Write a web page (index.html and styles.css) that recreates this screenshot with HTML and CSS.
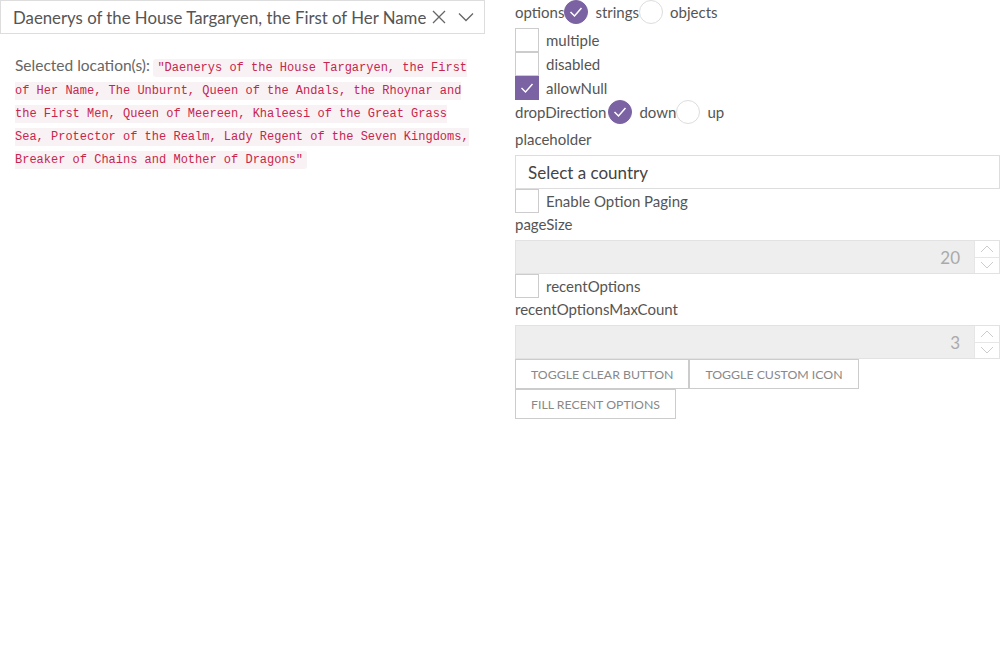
FILE: index.html
```html
<!DOCTYPE html>
<html>
<head>
<meta charset="utf-8">
<link rel="stylesheet" href="styles.css">
</head>
<body>
<div class="app">
  <div class="left">
    <div class="combo">
      <span class="combo-value">Daenerys of the House Targaryen, the First of Her Name</span>
      <svg class="combo-clear" width="16" height="16" viewBox="0 0 16 16"><path d="M2 2L14 14M14 2L2 14" stroke="#666" stroke-width="1.3" fill="none"/></svg>
      <svg class="combo-arrow" width="16" height="10" viewBox="0 0 16 10"><path d="M1 1.5L8 8.5L15 1.5" stroke="#666" stroke-width="1.3" fill="none"/></svg>
    </div>
    <div class="result"><span class="result-label">Selected location(s):</span> <code>"Daenerys of the House Targaryen, the First of Her Name, The Unburnt, Queen of the Andals, the Rhoynar and the First Men, Queen of Meereen, Khaleesi of the Great Grass Sea, Protector of the Realm, Lady Regent of the Seven Kingdoms, Breaker of Chains and Mother of Dragons"</code></div>
  </div>
  <div class="right">
    <div class="row first">
      <span>options</span>
      <span class="radio on"><svg width="14" height="12" viewBox="0 0 14 12"><path d="M1.5 6L5.5 10L12.5 2" stroke="#fff" stroke-width="1.5" fill="none"/></svg></span>
      <span class="opt">strings</span>
      <span class="radio"></span>
      <span class="opt">objects</span>
    </div>
    <div class="row"><span class="box"></span><span class="opt">multiple</span></div>
    <div class="row"><span class="box"></span><span class="opt">disabled</span></div>
    <div class="row"><span class="box on"><svg width="14" height="12" viewBox="0 0 14 12"><path d="M1.5 6L5.5 10L12.5 2" stroke="#fff" stroke-width="1.4" fill="none"/></svg></span><span class="opt">allowNull</span></div>
    <div class="row">
      <span>dropDirection</span>
      <span class="radio on gap"><svg width="14" height="12" viewBox="0 0 14 12"><path d="M1.5 6L5.5 10L12.5 2" stroke="#fff" stroke-width="1.5" fill="none"/></svg></span>
      <span class="opt">down</span>
      <span class="radio"></span>
      <span class="opt">up</span>
    </div>
    <div class="label">placeholder</div>
    <div class="text-input">Select a country</div>
    <div class="row"><span class="box"></span><span class="opt">Enable Option Paging</span></div>
    <div class="label tight">pageSize</div>
    <div class="num-input"><span class="num-value">20</span><span class="spin"><span class="spin-btn"><svg width="14" height="8" viewBox="0 0 14 8"><path d="M1 7L7 1L13 7" stroke="#ccc" stroke-width="1" fill="none"/></svg></span><span class="spin-btn"><svg width="14" height="8" viewBox="0 0 14 8"><path d="M1 1L7 7L13 1" stroke="#ccc" stroke-width="1" fill="none"/></svg></span></span></div>
    <div class="row"><span class="box"></span><span class="opt">recentOptions</span></div>
    <div class="label tight">recentOptionsMaxCount</div>
    <div class="num-input"><span class="num-value">3</span><span class="spin"><span class="spin-btn"><svg width="14" height="8" viewBox="0 0 14 8"><path d="M1 7L7 1L13 7" stroke="#ccc" stroke-width="1" fill="none"/></svg></span><span class="spin-btn"><svg width="14" height="8" viewBox="0 0 14 8"><path d="M1 1L7 7L13 1" stroke="#ccc" stroke-width="1" fill="none"/></svg></span></span></div>
    <div class="buttons">
      <button class="btn">Toggle clear button</button>
      <button class="btn">Toggle custom icon</button>
    </div>
    <div class="buttons">
      <button class="btn">Fill recent options</button>
    </div>
  </div>
</div>
</body>
</html>
```
FILE: styles.css
```css
html, body {
  margin: 0;
  padding: 0;
  background: #fff;
}
body {
  font-family: Lato, "Open Sans", sans-serif;
  color: #555;
  font-size: 15px;
}
.app {
  display: grid;
  grid-template-columns: 485px 485px;
  column-gap: 30px;
  align-items: start;
}
.combo {
  height: 34px;
  box-sizing: border-box;
  border: 1px solid #ddd;
  display: flex;
  align-items: center;
  padding-left: 12px;
  padding-right: 10px;
}
.combo-value {
  flex: 1;
  font-size: 16.8px;
  color: #555;
  white-space: nowrap;
  overflow: hidden;
}
.combo-clear {
  margin: 0 11px 0 5px;
}
.result {
  padding: 20px 6px 0 15px;
  font-size: 14px;
  line-height: 23px;
  color: #666;
}
.result-label {
  font-size: 15.5px;
}
code {
  font-family: "Liberation Mono", monospace;
  font-size: 12px;
  line-height: 1;
  color: #c7254e;
  background: #f9f2f4;
  padding: 2px 4px;
  border-radius: 3px;
}
.right {
  display: flex;
  flex-direction: column;
}
.row {
  display: flex;
  align-items: center;
  height: 24px;
  white-space: nowrap;
}
.row.first {
  margin-bottom: 4px;
}
.opt {
  margin-left: 7px;
}
.radio {
  width: 24px;
  height: 24px;
  box-sizing: border-box;
  border-radius: 50%;
  border: 1px solid #ddd;
  display: flex;
  align-items: center;
  justify-content: center;
  background: #fff;
}
.radio.gap {
  margin-left: 2px;
}
.radio.on {
  background: #7b62a3;
  border-color: #7b62a3;
}
.box {
  width: 24px;
  height: 24px;
  box-sizing: border-box;
  border: 1px solid #ccc;
  display: flex;
  align-items: center;
  justify-content: center;
  background: #fff;
}
.box.on {
  background: #7b62a3;
  border-color: #7b62a3;
}
.label {
  height: 24px;
  line-height: 24px;
  margin-top: 3px;
}
.label.tight {
  margin-top: -1px;
}
.text-input {
  margin-top: 4px;
  height: 34px;
  box-sizing: border-box;
  border: 1px solid #ddd;
  padding-left: 12px;
  display: flex;
  align-items: center;
  font-size: 17px;
  color: #444;
}
.num-input {
  margin-top: 4px;
  height: 34px;
  box-sizing: border-box;
  border: 1px solid #e2e2e2;
  background: #eee;
  display: flex;
  align-items: stretch;
  color: #aaa;
  font-size: 17px;
}
.num-value {
  flex: 1;
  display: flex;
  align-items: center;
  justify-content: flex-end;
  padding-right: 14px;
}
.spin {
  width: 24px;
  display: flex;
  flex-direction: column;
  background: #fff;
  border-left: 1px solid #e6e6e6;
}
.spin-btn {
  flex: 1;
  display: flex;
  align-items: center;
  justify-content: center;
}
.spin-btn + .spin-btn {
  border-top: 1px solid #e6e6e6;
}
.buttons {
  display: flex;
}
.btn {
  height: 30px;
  box-sizing: border-box;
  border: 1px solid #ccc;
  background: #fff;
  color: #888;
  font-family: Lato, "Open Sans", sans-serif;
  font-size: 12.3px;
  text-transform: uppercase;
  padding: 0 15px;
  margin: 0;
}
```
